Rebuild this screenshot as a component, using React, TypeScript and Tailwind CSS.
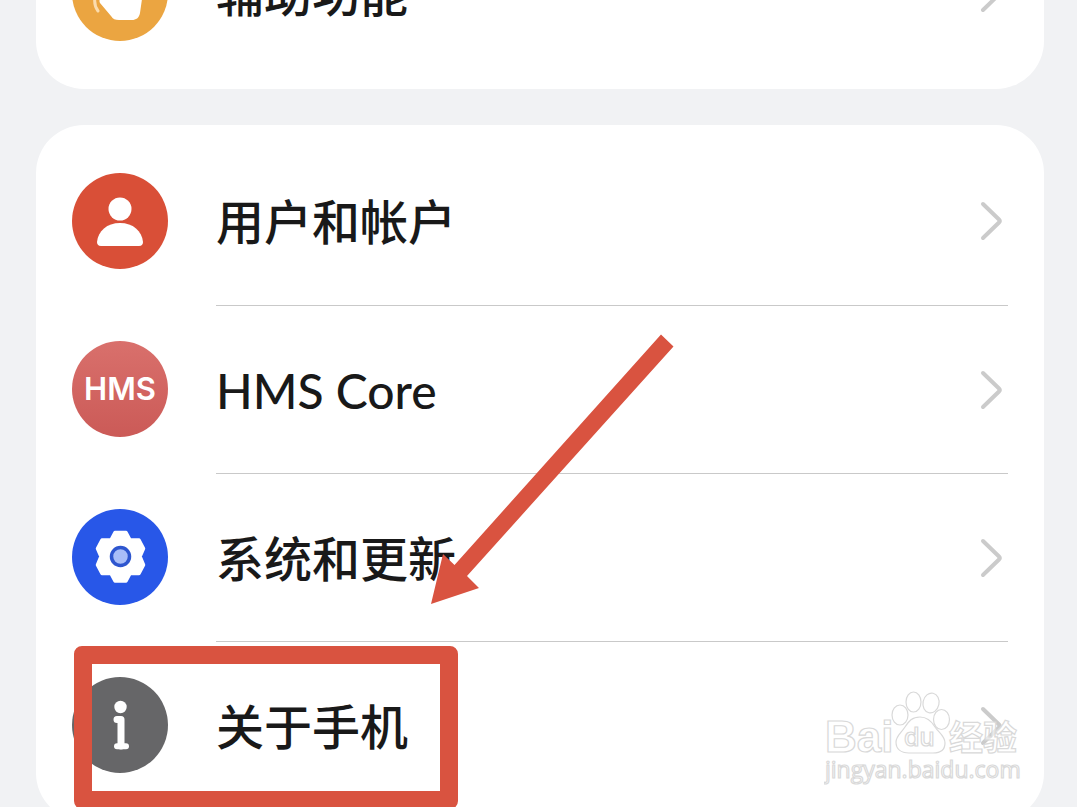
import type { ReactNode } from "react";

type Item = { label: string; icon: ReactNode; latin?: boolean };

function HandIcon() {
  return (
    <span className="flex size-24 shrink-0 rounded-full bg-[#eba541]">
      <svg viewBox="0 0 96 96" className="size-24" aria-hidden="true">
        <path
          d="M40 24c4 0 6 3 6 7v12l17 3c4 1 7 4 7 8l-2 14c-1 5-4 7-8 7H47c-4 0-6-1-8-4L28 58c-2-4 2-7 6-5V31c0-4 2-7 6-7z"
          fill="#fff"
        />
        <path d="M23 52c-1 6 0 10 3 14" fill="none" stroke="#fbdcae" strokeWidth="3" strokeLinecap="round" />
      </svg>
    </span>
  );
}

function UserIcon() {
  return (
    <span className="flex size-24 shrink-0 rounded-full bg-[#d94f37]">
      <svg viewBox="0 0 96 96" className="size-24" aria-hidden="true" fill="#fff">
        <circle cx="48" cy="36" r="11.5" />
        <path d="M29 73c-3 0-4-2-4-4 1-11 10-19 23-19s22 8 23 19c0 2-1 4-4 4z" />
      </svg>
    </span>
  );
}

function HmsIcon() {
  return (
    <span className="flex size-24 shrink-0 items-center justify-center rounded-full bg-linear-to-b from-[#d9706c] to-[#cb5a57] font-['Inter',sans-serif] text-[31px] font-semibold text-white">
      HMS
    </span>
  );
}

function GearIcon() {
  return (
    <span className="flex size-24 shrink-0 rounded-full bg-[#2857e8]">
      <svg viewBox="0 0 96 96" className="size-24" aria-hidden="true">
        <path
          d="M43 23.500H54L58 31H67L71.500 39.500L68 47.500L71.500 56L67 64.500H58L54 72H43L39 64.500H30L25.500 56L29 47.500L25.500 39.500L30 31H39Z"
          fill="#fff"
          stroke="#fff"
          strokeWidth="3.500"
          strokeLinejoin="round"
        />
        <circle cx="48.500" cy="47.500" r="9" fill="#a9bef8" stroke="#2e56cf" strokeWidth="3.500" />
      </svg>
    </span>
  );
}

function InfoIcon() {
  return (
    <span className="flex size-24 shrink-0 rounded-full bg-[#666668]">
      <svg viewBox="0 0 96 96" className="size-24" aria-hidden="true">
        <circle cx="48.500" cy="30" r="6.200" fill="#fff" />
        <path d="M45 42.500H49V69" fill="none" stroke="#fff" strokeWidth="7" strokeLinecap="round" strokeLinejoin="round" />
        <path d="M45 69.200h9" stroke="#fff" strokeWidth="6" strokeLinecap="round" />
      </svg>
    </span>
  );
}

function Chevron() {
  return (
    <svg viewBox="0 0 24 42" className="h-[42px] w-6 shrink-0" aria-hidden="true">
      <path
        d="M3 4l16 15.500q1.500 1.500 0 3L3 38"
        fill="none"
        stroke="#cbcbcb"
        strokeWidth="4"
        strokeLinecap="round"
        strokeLinejoin="round"
      />
    </svg>
  );
}

function Row({ item, divided }: { item: Item; divided: boolean }) {
  return (
    <li>
      <a href="#" className="flex h-[168px] items-center gap-12 px-9">
        {item.icon}
        <span
          className={
            divided
              ? "flex h-full min-w-0 flex-1 items-center justify-between border-t border-[#c9c9c9] pr-1"
              : "flex h-full min-w-0 flex-1 items-center justify-between pr-1"
          }
        >
          <span
            className={
              item.latin
                ? "pt-0.5 font-['Lato',sans-serif] text-5xl font-medium"
                : "pb-1 font-['Noto_Sans_CJK_SC',sans-serif] text-5xl font-medium"
            }
          >
            {item.label}
          </span>
          <Chevron />
        </span>
      </a>
    </li>
  );
}

function Group({ items, children }: { items: Item[]; children?: ReactNode }) {
  return (
    <section className="relative rounded-[48px] bg-white py-3">
      <ul>
        {items.map((item, i) => (
          <Row key={item.label} item={item} divided={i > 0} />
        ))}
      </ul>
      {children}
    </section>
  );
}

function Arrow() {
  return (
    <svg viewBox="0 0 244 270" className="pointer-events-none absolute top-[209px] left-[394px] h-[270px] w-[244px]" aria-hidden="true">
      <path d="M231 0.500L243.500 12.500L37 242L49 254L1 270L13 220L24.500 231Z" fill="#d95340" />
    </svg>
  );
}

function Watermark() {
  return (
    <svg
      viewBox="0 0 200 100"
      className="pointer-events-none absolute top-[563px] right-[20px] h-[100px] w-[200px]"
      fill="#ffffff"
      fillOpacity="0.6"
      stroke="#d9d9d9"
      strokeWidth="1.200"
    >
      <text x="1" y="64" fontFamily="Liberation Sans, sans-serif" fontWeight="700" fontSize="44">
        Bai
      </text>
      <ellipse cx="76" cy="27" rx="8" ry="10" />
      <ellipse cx="89.500" cy="14" rx="7.500" ry="10" />
      <ellipse cx="107" cy="15" rx="8" ry="10" transform="rotate(12 107 15)" />
      <ellipse cx="117.500" cy="31.500" rx="8" ry="10" />
      <path d="M96 29c8 0 12 5 15 10 4 6 10 9 10 16 0 7-5 10-12 10H85c-8 0-13-4-13-11 0-6 5-9 9-15s7-10 15-10z" />
      <text x="80" y="58" fontFamily="Inter, sans-serif" fontWeight="500" fontSize="25">
        du
      </text>
      <text x="125" y="62" fontFamily="Noto Sans CJK SC, sans-serif" fontWeight="700" fontSize="34">
        经验
      </text>
      <text x="1" y="90" fontFamily="Open Sans, sans-serif" fontWeight="400" fontSize="23">
        jingyan.baidu.com
      </text>
    </svg>
  );
}

const accessibility: Item[] = [{ label: "辅助功能", icon: <HandIcon /> }];

const system: Item[] = [
  { label: "用户和帐户", icon: <UserIcon /> },
  { label: "HMS Core", icon: <HmsIcon />, latin: true },
  { label: "系统和更新", icon: <GearIcon /> },
  { label: "关于手机", icon: <InfoIcon /> },
];

export default function App() {
  return (
    <main className="h-screen overflow-hidden bg-[#f1f2f4] text-[#191919]">
      <div className="-mt-[103px] mr-[33px] ml-9 flex flex-col gap-9">
        <Group items={accessibility} />
        <Group items={system}>
          <Arrow />
          <div className="pointer-events-none absolute top-[521px] left-[38px] h-[163px] w-96 rounded-lg border-[18px] border-[#d95340]" />
          <Watermark />
        </Group>
      </div>
    </main>
  );
}
